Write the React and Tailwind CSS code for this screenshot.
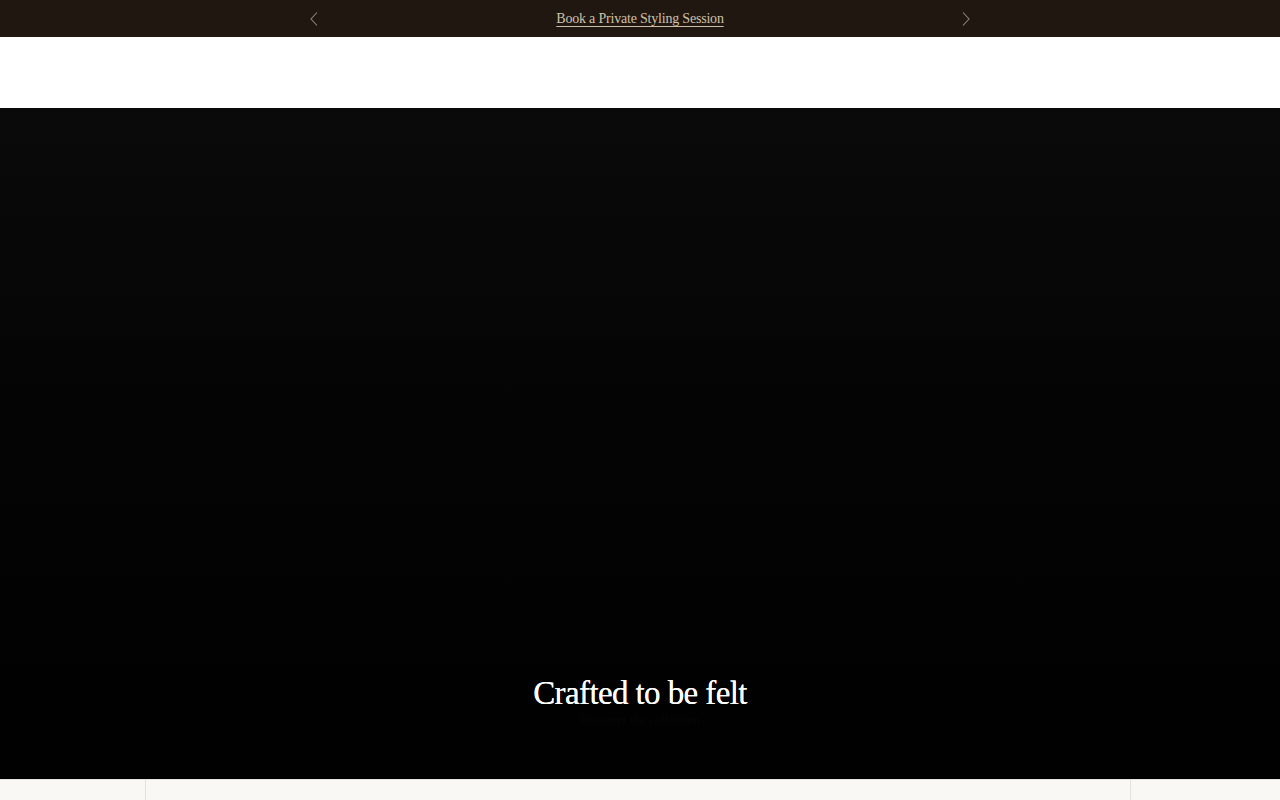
import React from 'react';

const serif = { fontFamily: '"Liberation Serif", "DejaVu Serif", serif' };

function Chevron({ dir }) {
  return (
    <svg width="10" height="16" viewBox="0 0 10 16" fill="none" stroke="#8f8574" strokeWidth="1.1">
      {dir === 'left' ? <path d="M8 1.5 2 8l6 6.5" /> : <path d="M2 1.5 8 8l-6 6.5" />}
    </svg>
  );
}

export default function App() {
  return (
    <div className="w-full h-[800px] overflow-hidden bg-white" style={serif}>
      {/* announcement bar */}
      <div className="h-[37px] bg-[#1f1710] flex items-center justify-center">
        <div className="w-[672px] flex items-center justify-between">
          <button className="w-5 flex justify-center">
            <Chevron dir="left" />
          </button>
          <a className="text-[14px] text-[#d0c1ab] underline underline-offset-[3px] decoration-[#cbbca7] tracking-[-0.2px]">
            Book a Private Styling Session
          </a>
          <button className="w-5 flex justify-center">
            <Chevron dir="right" />
          </button>
        </div>
      </div>

      {/* header */}
      <div className="h-[71px] bg-white" />

      {/* hero */}
      <div className="h-[671px] bg-gradient-to-b from-[#0a0a0a] to-[#010101] flex flex-col items-center justify-end pb-[50px]">
        <h2 className="text-[33px] leading-none text-white tracking-[-0.6px] [text-shadow:0_0_0.4px_#fff]">Crafted to be felt</h2>
        <p className="text-[13px] text-[#060606]">Discover the collection</p>
      </div>

      {/* strip below */}
      <div className="h-[21px] bg-[#f9f8f4] border-t border-[#e4e2dc] flex">
        <div className="w-[146px] border-r border-[#e4e2dc]" />
        <div className="flex-1 border-r border-[#e4e2dc]" />
        <div className="w-[149px]" />
      </div>
    </div>
  );
}
